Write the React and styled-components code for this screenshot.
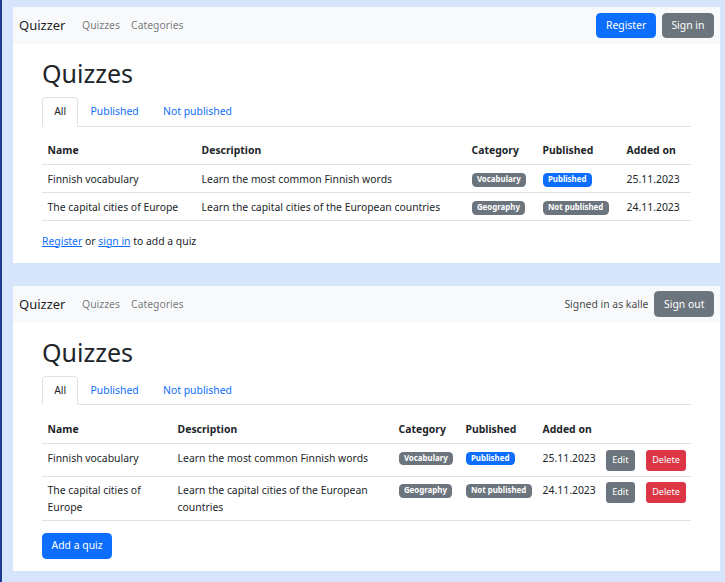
import React from 'react';
import styled, { createGlobalStyle, css } from 'styled-components';

const GlobalStyle = createGlobalStyle`
  html, body {
    margin: 0;
    padding: 0;
  }
  body {
    font-family: "Noto Sans", "Open Sans", sans-serif;
    font-size: 10.4px;
    line-height: 16.5px;
    color: #212529;
  }
  * {
    box-sizing: border-box;
  }
`;

const Page = styled.div`
  min-height: 582px;
  background-color: #d6e4fc;
  border-left: 2px solid #1d3b8f;
  padding: 7px 5px 11px 11px;
  display: flex;
  flex-direction: column;
  gap: 23px;
`;

const Panel = styled.div`
  background-color: #fff;
  padding-bottom: 1px;
`;

const Navbar = styled.nav`
  height: 37px;
  background-color: #f8f9fa;
  display: flex;
  align-items: center;
  padding: 0 6px;
`;

const Brand = styled.span`
  font-size: 13px;
  color: rgba(0, 0, 0, 0.9);
  margin-right: 11px;
`;

const NavLink = styled.a`
  color: rgba(0, 0, 0, 0.55);
  padding: 0 5.6px;
  text-decoration: none;
`;

const NavRight = styled.div`
  margin-left: auto;
  display: flex;
  align-items: center;
  gap: 6px;
`;

const SignedIn = styled.span`
  color: rgba(0, 0, 0, 0.75);
`;

const variants = {
  primary: '#0d6efd',
  secondary: '#6c757d',
  danger: '#dc3545',
};

const Button = styled.button`
  font-family: inherit;
  color: #fff;
  white-space: nowrap;
  background-color: ${(p) => variants[p.$variant]};
  border: 1px solid ${(p) => variants[p.$variant]};
  ${(p) =>
    p.$small
      ? css`
          font-size: 9.1px;
          line-height: 14.7px;
          padding: 2.2px 5.6px;
          border-radius: 2.8px;
        `
      : css`
          font-size: 10.4px;
          line-height: 16.8px;
          padding: 3.6px 8.6px;
          border-radius: 4.2px;
        `}
`;

const Content = styled.div`
  padding: 0 29px;
`;

const Title = styled.h1`
  font-size: 25px;
  font-weight: 400;
  line-height: 33.6px;
  margin: 13px 0 6px;
`;

const Tabs = styled.div`
  display: flex;
  border-bottom: 1px solid #dee2e6;
`;

const Tab = styled.a`
  padding: 5.6px 11.2px;
  line-height: 16.8px;
  margin-bottom: -1px;
  border: 1px solid transparent;
  border-top-left-radius: 4.2px;
  border-top-right-radius: 4.2px;
  text-decoration: none;
  color: #0d6efd;

  ${(p) =>
    p.$active &&
    css`
      color: #212529;
      background-color: #fff;
      border-color: #dee2e6 #dee2e6 #fff;
    `}
`;

const Table = styled.table`
  width: 100%;
  border-collapse: collapse;
  table-layout: fixed;
  margin: 10px 0 11.2px;
`;

const Col = styled.col`
  width: ${(p) => p.$w}px;
`;

const Th = styled.th`
  text-align: left;
  font-weight: 700;
  padding: 5.6px;
  white-space: nowrap;
  border-bottom: 1px solid #dee2e6;
`;

const Td = styled.td`
  vertical-align: top;
  padding: 5.4px 5.6px 5.2px;
  border-bottom: 1px solid #dee2e6;
`;

const Badge = styled.span`
  display: inline-block;
  font-size: 7.9px;
  font-weight: 700;
  line-height: 1;
  padding: 3px 5.3px;
  border-radius: 4.2px;
  color: #fff;
  white-space: nowrap;
  vertical-align: 1px;
  background-color: ${(p) => (p.$blue ? '#0d6efd' : '#6c757d')};
`;

const Note = styled.p`
  margin: 0 0 12.5px;
  line-height: 16.8px;
`;

const TextLink = styled.a`
  color: #0d6efd;
  text-decoration: underline;
`;

const AddButton = styled(Button)`
  margin-bottom: 11.5px;
`;

const quizzes = [
  {
    name: 'Finnish vocabulary',
    description: 'Learn the most common Finnish words',
    category: 'Vocabulary',
    published: true,
    added: '25.11.2023',
  },
  {
    name: 'The capital cities of Europe',
    description: 'Learn the capital cities of the European countries',
    category: 'Geography',
    published: false,
    added: '24.11.2023',
  },
];

const QuizTable = ({ admin }) => {
  const widths = admin ? [130, 221, 67, 77, 63, 40, 51] : [154, 270, 71, 84, 70];
  return (
    <Table>
      <colgroup>
        {widths.map((w, i) => (
          <Col key={i} $w={w} />
        ))}
      </colgroup>
      <thead>
        <tr>
          <Th>Name</Th>
          <Th>Description</Th>
          <Th>Category</Th>
          <Th>Published</Th>
          <Th>Added on</Th>
          {admin && <Th />}
          {admin && <Th />}
        </tr>
      </thead>
      <tbody>
        {quizzes.map((q) => (
          <tr key={q.name}>
            <Td>{q.name}</Td>
            <Td>{q.description}</Td>
            <Td>
              <Badge>{q.category}</Badge>
            </Td>
            <Td>
              <Badge $blue={q.published}>{q.published ? 'Published' : 'Not published'}</Badge>
            </Td>
            <Td>{q.added}</Td>
            {admin && (
              <Td>
                <Button $variant="secondary" $small>Edit</Button>
              </Td>
            )}
            {admin && (
              <Td>
                <Button $variant="danger" $small>Delete</Button>
              </Td>
            )}
          </tr>
        ))}
      </tbody>
    </Table>
  );
};

const QuizPage = ({ user }) => (
  <Panel>
    <Navbar>
      <Brand>Quizzer</Brand>
      <NavLink>Quizzes</NavLink>
      <NavLink>Categories</NavLink>
      <NavRight>
        {user ? (
          <>
            <SignedIn>Signed in as {user}</SignedIn>
            <Button $variant="secondary">Sign out</Button>
          </>
        ) : (
          <>
            <Button $variant="primary">Register</Button>
            <Button $variant="secondary">Sign in</Button>
          </>
        )}
      </NavRight>
    </Navbar>
    <Content>
      <Title>Quizzes</Title>
      <Tabs>
        <Tab $active>All</Tab>
        <Tab>Published</Tab>
        <Tab>Not published</Tab>
      </Tabs>
      <QuizTable admin={!!user} />
      {user ? (
        <AddButton $variant="primary">Add a quiz</AddButton>
      ) : (
        <Note>
          <TextLink>Register</TextLink> or <TextLink>sign in</TextLink> to add a quiz
        </Note>
      )}
    </Content>
  </Panel>
);

const App = () => (
  <>
    <GlobalStyle />
    <Page>
      <QuizPage />
      <QuizPage user="kalle" />
    </Page>
  </>
);

export default App;
